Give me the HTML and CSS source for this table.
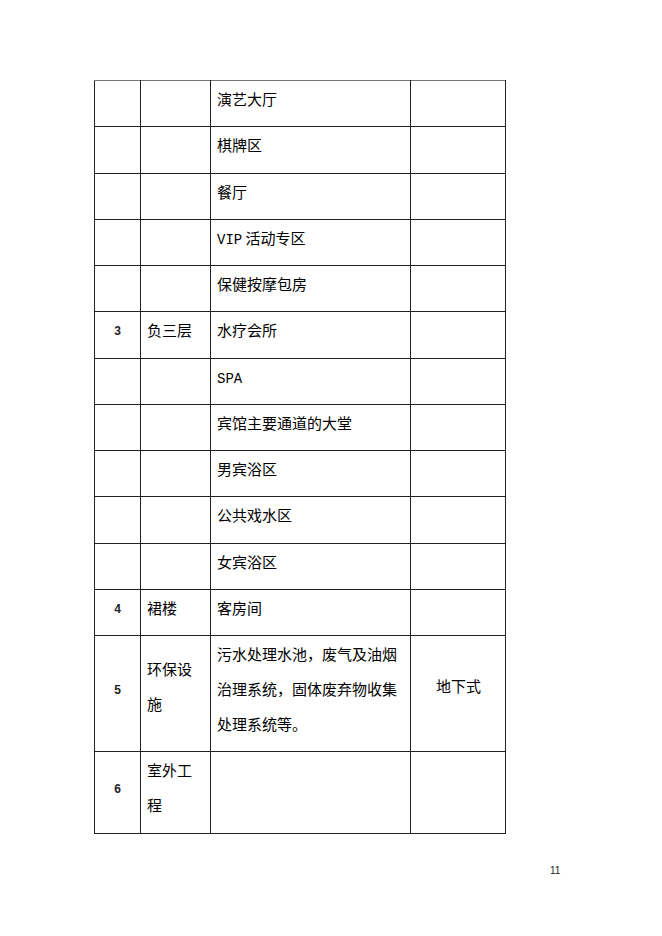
FILE: index.html
```html
<!DOCTYPE html>
<html lang="zh-CN">
<head>
<meta charset="utf-8">
<title>表格</title>
<link rel="stylesheet" href="styles.css">
</head>
<body>
<div class="page">
  <table class="grid">
    <colgroup>
      <col class="c-no">
      <col class="c-floor">
      <col class="c-item">
      <col class="c-note">
    </colgroup>
    <tbody>
      <tr><td class="no"></td><td></td><td>演艺大厅</td><td></td></tr>
      <tr><td class="no"></td><td></td><td>棋牌区</td><td></td></tr>
      <tr><td class="no"></td><td></td><td>餐厅</td><td></td></tr>
      <tr><td class="no"></td><td></td><td><span class="latin">VIP</span> 活动专区</td><td></td></tr>
      <tr><td class="no"></td><td></td><td>保健按摩包房</td><td></td></tr>
      <tr><td class="no">3</td><td>负三层</td><td>水疗会所</td><td></td></tr>
      <tr><td class="no"></td><td></td><td><span class="latin">SPA</span></td><td></td></tr>
      <tr><td class="no"></td><td></td><td>宾馆主要通道的大堂</td><td></td></tr>
      <tr><td class="no"></td><td></td><td>男宾浴区</td><td></td></tr>
      <tr><td class="no"></td><td></td><td>公共戏水区</td><td></td></tr>
      <tr><td class="no"></td><td></td><td>女宾浴区</td><td></td></tr>
      <tr><td class="no">4</td><td>裙楼</td><td>客房间</td><td></td></tr>
      <tr><td class="no">5</td><td class="mid">环保设<br>施</td><td>污水处理水池，废气及油烟治理系统，固体废弃物收集处理系统等。</td><td class="mid center">地下式</td></tr>
      <tr><td class="no">6</td><td>室外工<br>程</td><td></td><td></td></tr>
    </tbody>
  </table>
  <div class="pageno">11</div>
</div>
</body>
</html>
```

FILE: styles.css
```css
html, body {
  margin: 0;
  padding: 0;
  background: #ffffff;
}

.page {
  width: 662px;
  height: 936px;
  padding-top: 80px;
  box-sizing: border-box;
  font-family: "Noto Sans CJK SC", "Noto Sans", sans-serif;
  color: #000;
}

.grid {
  margin-left: 94px;
  border-collapse: collapse;
  table-layout: fixed;
  width: 411px;
}

.c-no { width: 46px; }
.c-floor { width: 70px; }
.c-item { width: 200px; }
.c-note { width: 95px; }

.grid td {
  border: 1px solid #222;
  padding: 0 5px 10.25px 6px;
  height: 35px;
  line-height: 35px;
  font-size: 15px;
  vertical-align: top;
  word-break: break-all;
}

.grid tr:first-child td {
  border-top: 1px solid #777;
}

.grid td.no {
  text-align: center;
  vertical-align: middle;
  padding: 0 0 6px 0;
  font-family: "Liberation Sans", "Noto Sans", sans-serif;
  font-size: 12px;
  font-weight: bold;
  color: #222;
}

.grid td.mid {
  vertical-align: middle;
  padding-top: 0;
  padding-bottom: 16px;
}

.grid td.center {
  text-align: center;
}

.latin {
  font-family: "Liberation Mono", monospace;
  font-size: 14px;
  line-height: 1;
}

.pageno {
  margin-top: 31px;
  margin-left: 550px;
  font-family: "Liberation Sans", sans-serif;
  font-size: 10px;
  color: #222;
}
```
